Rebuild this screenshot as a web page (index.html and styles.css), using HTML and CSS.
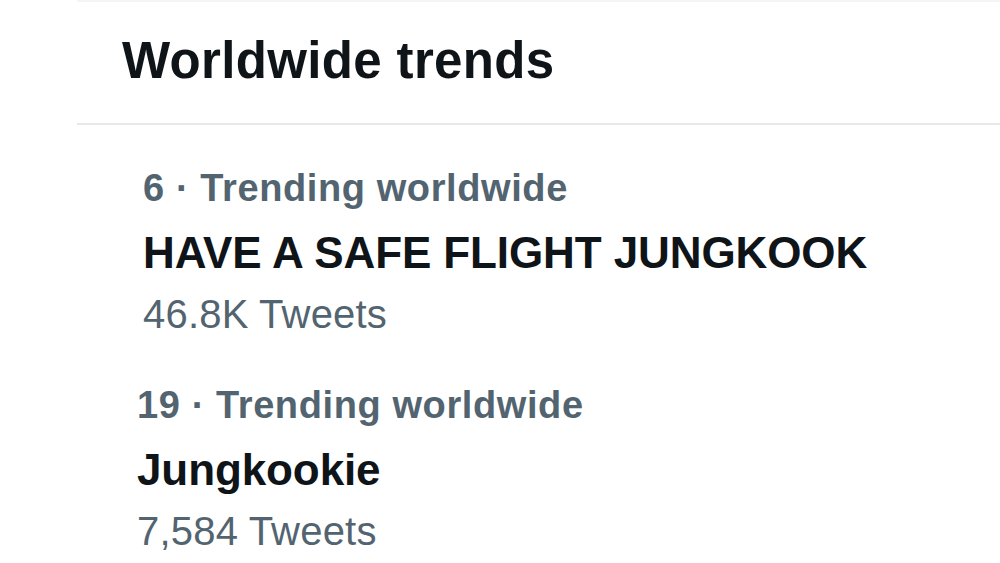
FILE: index.html
```html
<!DOCTYPE html>
<html lang="en">
<head>
<meta charset="utf-8">
<title>Worldwide trends</title>
<link rel="stylesheet" href="styles.css">
</head>
<body>
<main class="panel">
  <header class="panel-head">
    <h2 class="panel-title">Worldwide trends</h2>
  </header>
  <section class="trends">
    <div class="trend">
      <div class="trend-meta">6 · Trending worldwide</div>
      <div class="trend-name">HAVE A SAFE FLIGHT JUNGKOOK</div>
      <div class="trend-count">46.8K Tweets</div>
    </div>
    <div class="trend trend--second">
      <div class="trend-meta">19 · Trending worldwide</div>
      <div class="trend-name">Jungkookie</div>
      <div class="trend-count">7,584 Tweets</div>
    </div>
  </section>
</main>
</body>
</html>
```

FILE: styles.css
```css
html, body {
  margin: 0;
  padding: 0;
  background: #ffffff;
}

body {
  width: 1000px;
  height: 563px;
  overflow: hidden;
  font-family: "Liberation Sans", Arial, sans-serif;
  color: #0f1419;
}

.panel {
  margin-left: 77px;
  border-top: 2px solid #f3f5f6;
}

.panel-head {
  padding: 29px 0 32px 45px;
  border-bottom: 2px solid #e6e8ea;
}

.panel-title {
  margin: 0;
  font-size: 51px;
  line-height: 60px;
  font-weight: 700;
  letter-spacing: 0.35px;
  color: #0f1419;
}

.trends {
  display: flex;
  flex-direction: column;
  gap: 29px;
  padding-top: 31px;
}

.trend {
  display: flex;
  flex-direction: column;
  padding-left: 66px;
}

.trend--second {
  padding-left: 60px;
}

.trend-meta {
  font-size: 38px;
  line-height: 65px;
  font-weight: 700;
  letter-spacing: 0.6px;
  color: #536471;
}

.trend-name {
  font-size: 44px;
  line-height: 64px;
  font-weight: 700;
  letter-spacing: -0.1px;
  color: #0f1419;
}

.trend-count {
  font-size: 40px;
  line-height: 59px;
  font-weight: 400;
  letter-spacing: 0.2px;
  color: #536471;
}
```
